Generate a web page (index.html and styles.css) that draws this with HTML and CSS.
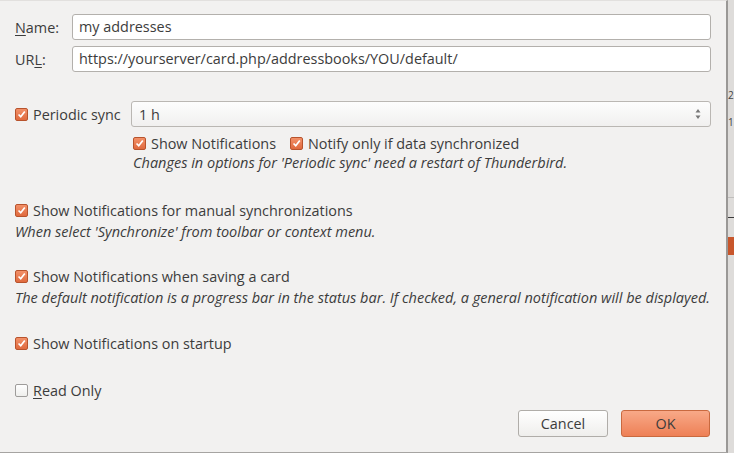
FILE: index.html
```html
<!DOCTYPE html>
<html>
<head>
<meta charset="utf-8">
<link rel="stylesheet" href="styles.css">
</head>
<body>
<div class="desktop">
  <div class="dialog">
    <div class="field">
      <label class="flabel"><u>N</u>ame:</label>
      <div class="input">my addresses</div>
    </div>
    <div class="field field2">
      <label class="flabel">UR<u>L</u>:</label>
      <div class="input">https://yourserver/card.php/addressbooks/YOU/default/</div>
    </div>

    <div class="periodic">
      <div class="check on pl"><span class="box"><svg viewBox="0 0 13 13"><path d="M3 6.5 L5.6 9.2 L10.4 3" fill="none" stroke="#fff" stroke-width="2"/></svg></span><span class="lt">Periodic sync</span></div>
      <div class="select"><span>1 h</span><svg class="arrows" viewBox="0 0 8 14"><path d="M4 2 L6.5 5.5 H1.5 Z M4 12 L6.5 8.5 H1.5 Z" fill="#777"/></svg></div>
    </div>
    <div class="sub">
      <div class="subrow">
        <div class="check on"><span class="box"><svg viewBox="0 0 13 13"><path d="M3 6.5 L5.6 9.2 L10.4 3" fill="none" stroke="#fff" stroke-width="2"/></svg></span><span class="lt">Show Notifications</span></div>
        <div class="check on"><span class="box"><svg viewBox="0 0 13 13"><path d="M3 6.5 L5.6 9.2 L10.4 3" fill="none" stroke="#fff" stroke-width="2"/></svg></span><span class="lt">Notify only if data synchronized</span></div>
      </div>
      <div class="note">Changes in options for 'Periodic sync' need a restart of Thunderbird.</div>
    </div>

    <div class="opt opt-manual">
      <div class="check on"><span class="box"><svg viewBox="0 0 13 13"><path d="M3 6.5 L5.6 9.2 L10.4 3" fill="none" stroke="#fff" stroke-width="2"/></svg></span><span class="lt">Show Notifications for manual synchronizations</span></div>
      <div class="note">When select 'Synchronize' from toolbar or context menu.</div>
    </div>

    <div class="opt opt-save">
      <div class="check on"><span class="box"><svg viewBox="0 0 13 13"><path d="M3 6.5 L5.6 9.2 L10.4 3" fill="none" stroke="#fff" stroke-width="2"/></svg></span><span class="lt">Show Notifications when saving a card</span></div>
      <div class="note">The default notification is a progress bar in the status bar. If checked, a general notification will be displayed.</div>
    </div>

    <div class="opt opt-startup">
      <div class="check on"><span class="box"><svg viewBox="0 0 13 13"><path d="M3 6.5 L5.6 9.2 L10.4 3" fill="none" stroke="#fff" stroke-width="2"/></svg></span><span class="lt">Show Notifications on startup</span></div>
    </div>

    <div class="opt opt-ro">
      <div class="check"><span class="box"></span><span class="lt"><u>R</u>ead Only</span></div>
    </div>

    <div class="buttons">
      <button class="btn">Cancel</button>
      <button class="btn ok">OK</button>
    </div>
  </div>
  <div class="bgwin">
    <span class="g g2">2</span>
    <span class="g g1">1</span>
    <span class="ln ln1"></span>
    <span class="ln ln2"></span>
    <span class="orange"></span>
  </div>
</div>
</body>
</html>
```

FILE: styles.css
```css
html, body {
  margin: 0;
  padding: 0;
  width: 734px;
  height: 453px;
  overflow: hidden;
  background: #dcdbd9;
}
.desktop {
  display: flex;
  height: 453px;
}
.dialog {
  box-sizing: border-box;
  width: 728px;
  height: 453px;
  background: #f2f1f0;
  border-top: 1px solid #e2e0de;
  border-right: 2px solid #9a9896;
  border-bottom: 1px solid #a6a4a2;
  padding: 13px 0 0 15px;
  font-family: "Open Sans", "DejaVu Sans", sans-serif;
  font-size: 14.4px;
  color: #3c3c3c;
}
.dialog u { text-decoration: underline; text-underline-offset: 2px; }
.field {
  display: flex;
  align-items: center;
  height: 26px;
}
.field2 { margin-top: 6px; }
.flabel { width: 57px; }
.input {
  box-sizing: border-box;
  width: 639px;
  height: 26px;
  background: #fff;
  border: 1px solid #b3b0ac;
  border-radius: 3px;
  padding: 0 6px;
  line-height: 24px;
  white-space: nowrap;
}
.periodic {
  display: flex;
  align-items: center;
  margin-top: 29px;
  height: 26px;
}
.pl { width: 116px; }
.select {
  box-sizing: border-box;
  width: 580px;
  height: 26px;
  border: 1px solid #bab7b3;
  border-radius: 3px;
  background: linear-gradient(#fdfdfd, #f1f0ef);
  display: flex;
  align-items: center;
  justify-content: space-between;
  padding: 0 8px 0 7px;
}
.arrows { width: 8px; height: 14px; }
.check {
  display: flex;
  align-items: center;
  white-space: nowrap;
}
.box {
  box-sizing: border-box;
  width: 13px;
  height: 13px;
  border-radius: 2px;
  border: 1px solid #9e9c9a;
  background: linear-gradient(#ffffff, #eeeeec);
  margin-right: 5px;
  display: flex;
  flex: none;
}
.on .box {
  border-color: #b8532c;
  background: linear-gradient(#f29068, #e06a3e);
}
.box svg { width: 11px; height: 11px; }
.sub {
  margin-left: 118px;
  margin-top: 6px;
}
.subrow {
  display: flex;
  gap: 14px;
  height: 20px;
  align-items: center;
}
.note {
  font-style: italic;
  font-size: 14.5px;
  line-height: 20px;
  white-space: nowrap;
}
.opt .check { height: 21px; }
.opt .note { line-height: 21px; }
.opt-manual { margin-top: 27px; }
.opt-save { margin-top: 24px; }
.opt-startup { margin-top: 25px; }
.opt-ro { margin-top: 26px; }
.buttons {
  display: flex;
  justify-content: flex-end;
  gap: 13px;
  margin-top: 9px;
  width: 695px;
}
.btn {
  box-sizing: border-box;
  width: 90px;
  height: 27px;
  font-family: "Open Sans", "DejaVu Sans", sans-serif;
  font-size: 14.4px;
  color: #3c3c3c;
  border: 1px solid #b0ada9;
  border-radius: 3px;
  background: linear-gradient(#ffffff, #efeeec);
  padding: 0;
}
.btn.ok {
  width: 89px;
  border-color: #c9693f;
  background: linear-gradient(#f8a988, #ee8056);
}
.bgwin {
  position: relative;
  flex: 1;
  background: #dedcda;
  overflow: hidden;
  font-family: "Open Sans", sans-serif;
  font-size: 10px;
  color: #444;
}
.g { position: absolute; left: 0; }
.g2 { top: 88px; }
.g1 { top: 115px; }
.ln { position: absolute; left: 0; right: 0; height: 1px; }
.ln1 { top: 197px; background: #c0bebc; }
.ln2 { top: 217px; background: #3a3a3a; }
.orange { position: absolute; left: 0; right: 0; top: 237px; height: 18px; background: #c8562b; }
```
